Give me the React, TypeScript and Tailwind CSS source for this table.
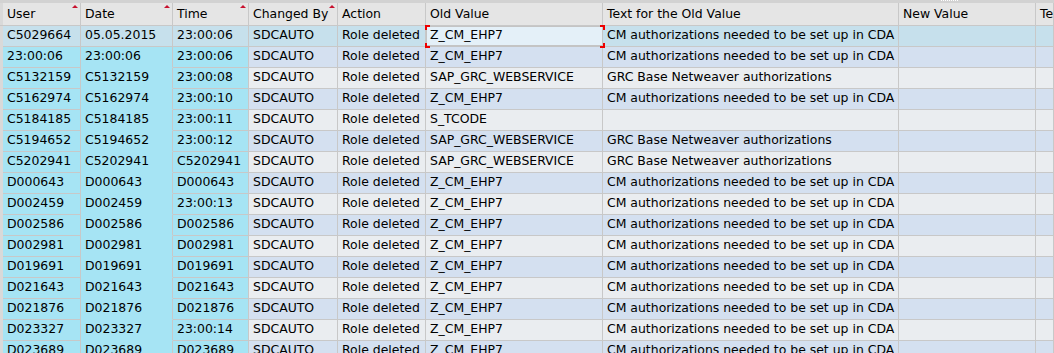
import React from "react";

const cols = ["User", "Date", "Time", "Changed By", "Action", "Old Value", "Text for the Old Value", "New Value", "Te"];
const sorted = [true, true, true, true, false, false, false, false, false];

const CM = "CM authorizations needed to be set up in CDA";
const GRC = "GRC Base Netweaver authorizations";

const rows: string[][] = [
  ["C5029664", "05.05.2015", "23:00:06", "Z_CM_EHP7", CM],
  ["23:00:06", "23:00:06", "23:00:06", "Z_CM_EHP7", CM],
  ["C5132159", "C5132159", "23:00:08", "SAP_GRC_WEBSERVICE", GRC],
  ["C5162974", "C5162974", "23:00:10", "Z_CM_EHP7", CM],
  ["C5184185", "C5184185", "23:00:11", "S_TCODE", ""],
  ["C5194652", "C5194652", "23:00:12", "SAP_GRC_WEBSERVICE", GRC],
  ["C5202941", "C5202941", "C5202941", "SAP_GRC_WEBSERVICE", GRC],
  ["D000643", "D000643", "D000643", "Z_CM_EHP7", CM],
  ["D002459", "D002459", "23:00:13", "Z_CM_EHP7", CM],
  ["D002586", "D002586", "D002586", "Z_CM_EHP7", CM],
  ["D002981", "D002981", "D002981", "Z_CM_EHP7", CM],
  ["D019691", "D019691", "D019691", "Z_CM_EHP7", CM],
  ["D021643", "D021643", "D021643", "Z_CM_EHP7", CM],
  ["D021876", "D021876", "D021876", "Z_CM_EHP7", CM],
  ["D023327", "D023327", "23:00:14", "Z_CM_EHP7", CM],
  ["D023689", "D023689", "D023689", "Z_CM_EHP7", CM],
];

const grid = "grid grid-cols-[3px_78px_92px_76px_89px_88px_177px_296px_137px_1fr]";

function FocusCorners() {
  return (
    <>
      <span className="absolute z-10 -left-[2px] -top-[2px] h-[5px] w-[5px] border-l-2 border-t-2 border-[#ee0000]" />
      <span className="absolute z-10 -right-[3px] -top-[2px] h-[5px] w-[5px] border-r-2 border-t-2 border-[#ee0000]" />
      <span className="absolute z-10 -left-[2px] -bottom-[3px] h-[5px] w-[5px] border-l-2 border-b-2 border-[#ee0000]" />
      <span className="absolute z-10 -right-[3px] -bottom-[3px] h-[5px] w-[5px] border-r-2 border-b-2 border-[#ee0000]" />
    </>
  );
}

export default function App() {
  return (
    <div className="w-[1054px] h-[353px] overflow-hidden bg-[#eaedf0] text-black font-['DejaVu_Sans',sans-serif] text-[12.45px] leading-none">
      {/* splitter strip */}
      <div className="h-[3px] bg-[#d2d2d2] flex">
        <div className="ml-[941px] w-[17px] border-t border-dotted border-white" />
      </div>

      {/* header */}
      <div className={`${grid} h-[23px] bg-[#e5e5e5]`}>
        <div className="bg-[#d9d9d9] border-b border-[#c8c8c8]" />
        {cols.map((c, i) => (
          <div key={c} className="relative flex items-center pl-[4px] border-r border-b border-[#c8c8c8] whitespace-nowrap overflow-hidden">
            {c}
            {sorted[i] && (
              <span className="absolute right-[2px] top-[2px] w-0 h-0 border-l-[3px] border-r-[3px] border-b-[3px] border-l-transparent border-r-transparent border-b-[#c8102e]" />
            )}
          </div>
        ))}
      </div>

      {/* body */}
      {rows.map((r, ri) => {
        const first = ri === 0;
        const rowBg = first ? "bg-[#c6e0ec]" : ri % 2 === 1 ? "bg-[#d4e0f0]" : "bg-[#eaedf0]";
        const keyBg = first ? "bg-[#c6e0ec]" : "bg-[#a6e4f4]";
        return (
          <div key={ri} className={`${grid} h-[21px] ${rowBg}`}>
            <div className="bg-[#d9d9d9]" />
            <div className={`${keyBg} flex items-center pl-[4px] pb-[2px] border-r border-b border-[#c8c8c8]`}>{r[0]}</div>
            <div className={`${keyBg} flex items-center pl-[4px] pb-[2px] border-r border-b border-[#c8c8c8] ${first ? "" : "border-b-[#a6e4f4]"}`}>{r[1]}</div>
            <div className={`${keyBg} flex items-center pl-[4px] pb-[2px] border-r border-b border-[#c8c8c8]`}>{r[2]}</div>
            <div className="flex items-center pl-[4px] pb-[2px] border-r border-b border-[#c8c8c8]">SDCAUTO</div>
            <div className="flex items-center pl-[4px] pb-[2px] border-r border-b border-[#c8c8c8] whitespace-nowrap">Role deleted</div>
            {first ? (
              <div className="relative flex items-center pl-[3px] pb-[2px] bg-[#e4f0f8] border border-[#c4c4c4] border-b-2">
                {r[3]}
                <FocusCorners />
              </div>
            ) : (
              <div className="flex items-center pl-[4px] pb-[2px] border-r border-b border-[#c8c8c8]">{r[3]}</div>
            )}
            <div className="flex items-center pl-[4px] pb-[2px] border-r border-b border-[#c8c8c8] whitespace-nowrap overflow-hidden">{r[4]}</div>
            <div className="border-r border-b border-[#c8c8c8]" />
            <div className="border-r border-b border-[#c8c8c8]" />
          </div>
        );
      })}
    </div>
  );
}
